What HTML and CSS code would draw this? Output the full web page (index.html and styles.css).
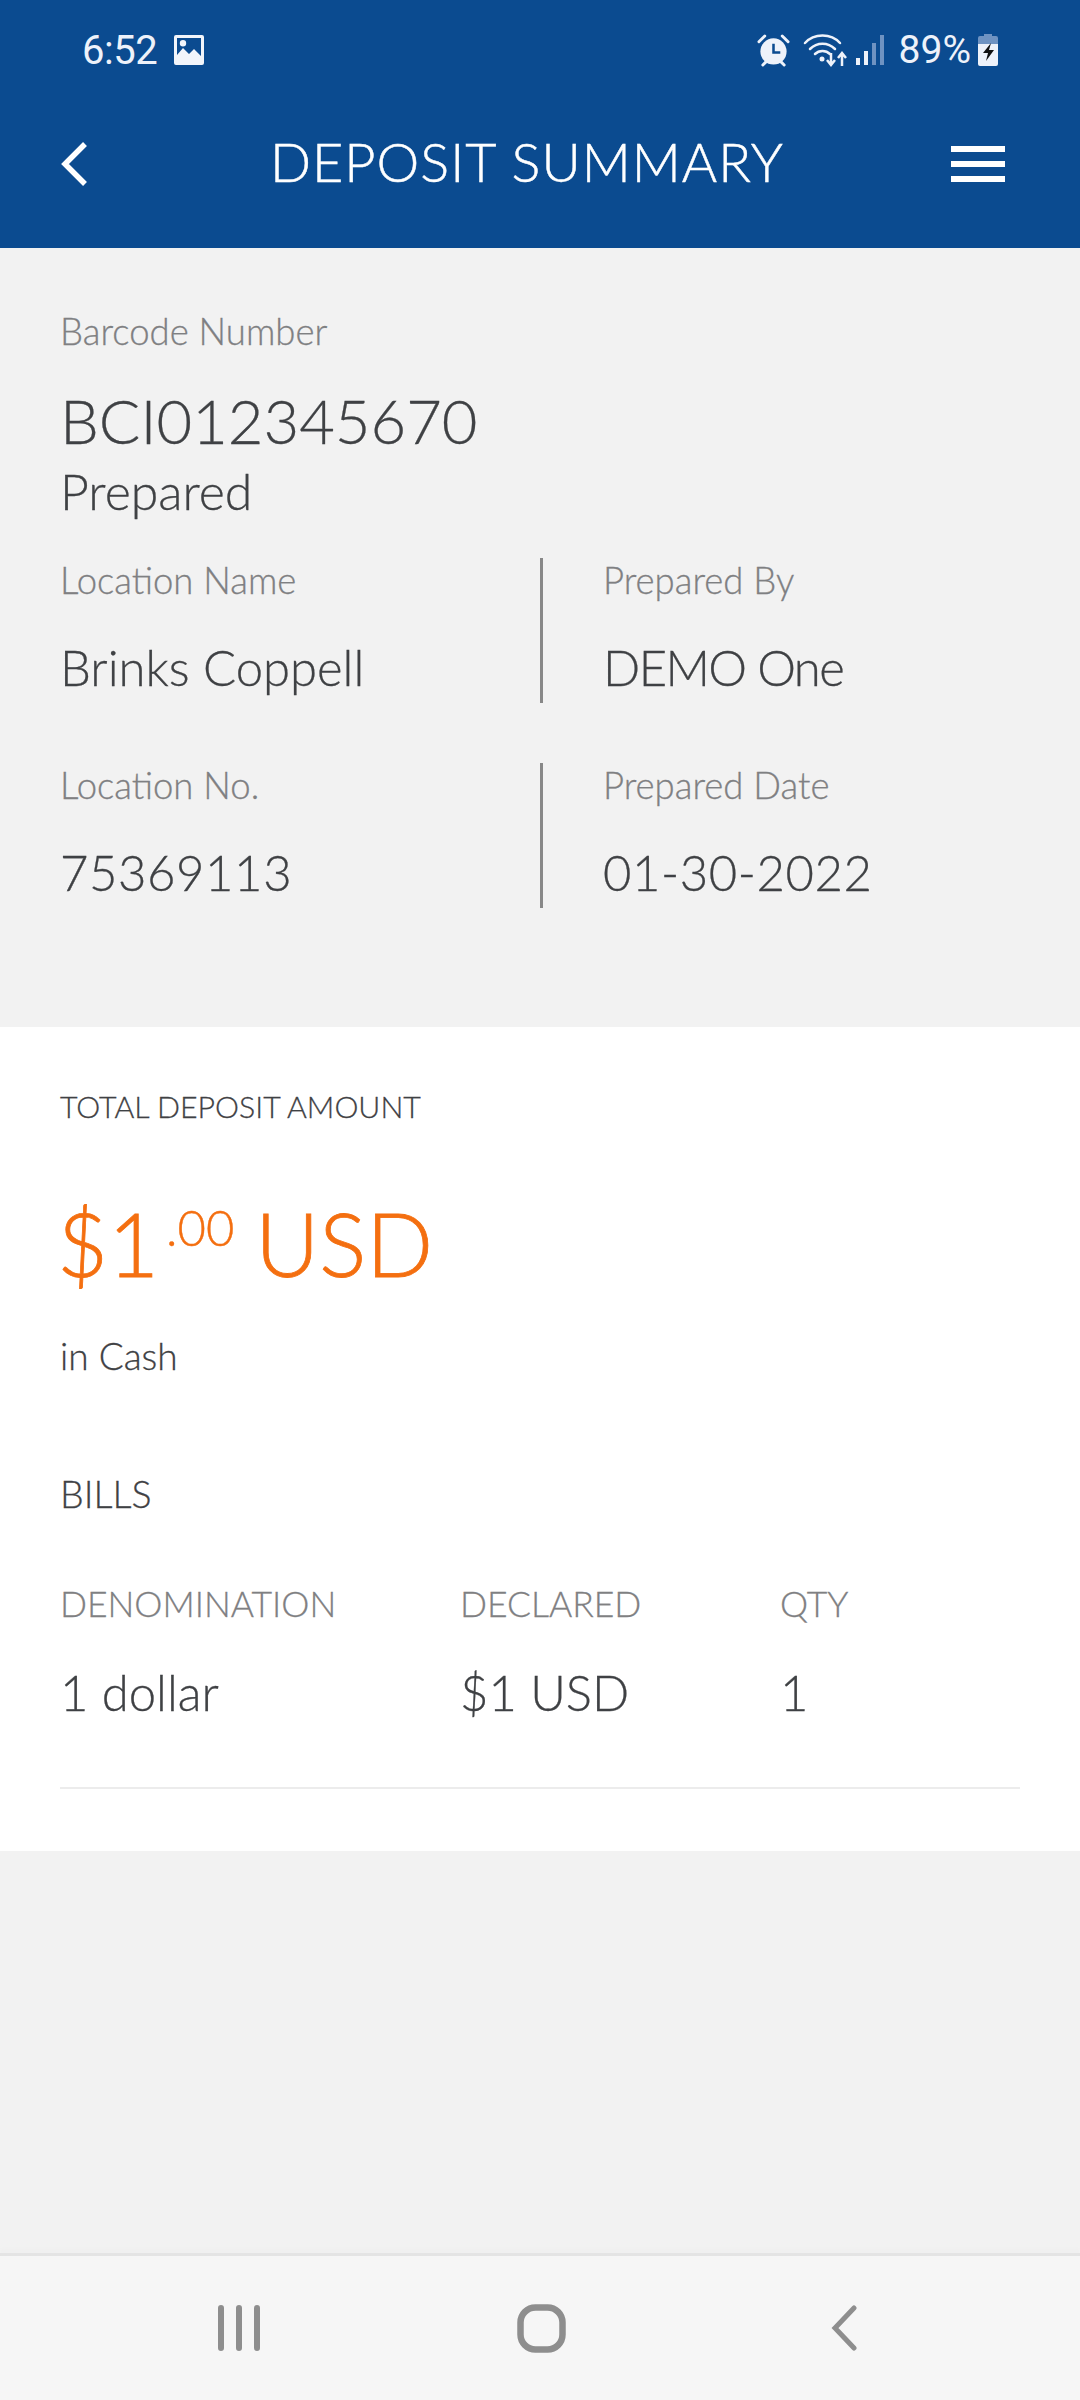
FILE: index.html
```html
<!DOCTYPE html>
<html lang="en">
<head>
<meta charset="utf-8">
<title>Deposit Summary</title>
<link rel="stylesheet" href="styles.css">
</head>
<body>
<div class="screen">
  <header class="topbar">
    <div class="status">
      <div class="status-left">
        <span class="clock">6:52</span>
        <svg class="ic-image" viewBox="0 0 30 30"><path fill="#f2f5fb" fill-rule="evenodd" d="M2 0h26a2 2 0 0 1 2 2v26a2 2 0 0 1-2 2H2a2 2 0 0 1-2-2V2a2 2 0 0 1 2-2zM3 3v17l6-7 6 6 5-5 7 7V3zM9 5a3.2 3.2 0 1 1 0 6.400a3.200 3.200 0 0 1 0-6.400z"/></svg>
      </div>
      <div class="status-right">
        <svg class="ic-alarm" viewBox="0 0 34 34"><circle cx="17" cy="18" r="13.500" fill="#eef2fa"/><path d="M17 10v9h7" fill="none" stroke="#0b4b90" stroke-width="2.600"/><path d="M2 8l6-6M32 8l-6-6M6 32l3-3M28 32l-3-3" stroke="#eef2fa" stroke-width="3" stroke-linecap="round"/></svg>
        <svg class="ic-wifi" viewBox="0 0 44 34"><path d="M2 10C11 0 28 0 37 10M7 16c7-7 18-7 25 0M12 21c4-4 11-4 15 0" fill="none" stroke="#eef2fa" stroke-width="2.500" stroke-linecap="round"/><circle cx="19" cy="26" r="2.500" fill="#eef2fa"/><path d="M28 20v11M24 27l4 5 4-5M39 33V21M35 25l4-5 4 5" fill="none" stroke="#eef2fa" stroke-width="2.500"/></svg>
        <svg class="ic-signal" viewBox="0 0 28 30"><rect x="0" y="23" width="4" height="7" fill="#eef2fa"/><rect x="8" y="16" width="4" height="14" fill="#eef2fa"/><rect x="16" y="8" width="4" height="22" fill="#6f93c2"/><rect x="24" y="0" width="4" height="30" fill="#6f93c2"/></svg>
        <span class="pct">89%</span>
        <svg class="ic-batt" viewBox="0 0 20 32"><path d="M6 0h8v2h4a2 2 0 0 1 2 2v8H0V4a2 2 0 0 1 2-2h4z" fill="#6f93c2"/><path d="M0 10h20v20a2 2 0 0 1-2 2H2a2 2 0 0 1-2-2z" fill="#eef2fa"/><path d="M13 9L5 19h5l-2 8 8-11h-5l2-7z" fill="#111"/></svg>
      </div>
    </div>
    <div class="navrow">
      <svg class="ic-back" viewBox="0 0 28 46"><path d="M25 3L5 23l20 20" fill="none" stroke="#fff" stroke-width="5.500"/></svg>
      <h1 class="title">DEPOSIT SUMMARY</h1>
      <div class="burger"><span></span><span></span><span></span></div>
    </div>
  </header>

  <section class="info">
    <div class="label">Barcode Number</div>
    <div class="barcode">BCI012345670</div>
    <div class="state">Prepared</div>
    <div class="grid">
      <div class="cell left"><div class="label">Location Name</div><div class="value">Brinks Coppell</div></div>
      <div class="cell right"><div class="label">Prepared By</div><div class="value caps">DEMO One</div></div>
      <div class="cell left"><div class="label">Location No.</div><div class="value num">75369113</div></div>
      <div class="cell right"><div class="label">Prepared Date</div><div class="value num">01-30-2022</div></div>
    </div>
  </section>

  <section class="totals">
    <div class="total-head">TOTAL DEPOSIT AMOUNT</div>
    <div class="amount">$1<sup class="cents">.00</sup> USD</div>
    <div class="incash">in Cash</div>
    <div class="bills">BILLS</div>
    <div class="table">
      <div class="th">DENOMINATION</div><div class="th">DECLARED</div><div class="th">QTY</div>
      <div class="td">1 dollar</div><div class="td">$1 USD</div><div class="td">1</div>
    </div>
    <div class="rule"></div>
  </section>

  <div class="spacer"></div>

  <footer class="sysnav">
    <svg class="nav-recent" viewBox="0 0 42 46"><path d="M3 3v40M21 3v40M39 3v40" stroke="#8e8e8e" stroke-width="6" stroke-linecap="round"/></svg>
    <svg class="nav-home" viewBox="0 0 49 49"><rect x="3.500" y="3.500" width="42" height="42" rx="15" fill="none" stroke="#8e8e8e" stroke-width="6.500"/></svg>
    <svg class="nav-back" viewBox="0 0 26 46"><path d="M23 3L4 23l19 20" fill="none" stroke="#8e8e8e" stroke-width="5" stroke-linecap="round"/></svg>
  </footer>
</div>
</body>
</html>
```
FILE: styles.css
```css
* { box-sizing: border-box; }
html, body { margin: 0; padding: 0; }
body { width: 1080px; height: 2400px; font-family: "Lato", "Liberation Sans", sans-serif; font-weight: 300; color: #3f4144; background: #f2f2f2; -webkit-text-stroke: 0.3px currentColor; }
.screen { width: 1080px; height: 2400px; display: flex; flex-direction: column; }

.topbar { height: 248px; background: #0b4b90; color: #fff; display: flex; flex-direction: column; flex: none; }
.status { height: 100px; padding: 0 82px 0 82px; display: flex; justify-content: space-between; align-items: center; font-family: "Roboto", sans-serif; font-weight: 400; color: #eef2fa; -webkit-text-stroke: 0; }
.status-left, .status-right { display: flex; align-items: center; }
.clock { font-size: 40px; letter-spacing: -0.500px; }
.ic-image { width: 30px; height: 30px; margin-left: 17px; }
.ic-alarm { width: 33px; height: 33px; }
.ic-wifi { width: 44px; height: 34px; margin-left: 13px; }
.ic-signal { width: 28px; height: 30px; margin-left: 9px; }
.pct { font-size: 39px; margin-left: 15px; }
.ic-batt { width: 20px; height: 32px; margin-left: 7px; }
.navrow { flex: 1; display: flex; align-items: center; justify-content: space-between; padding: 0 75px 20px 60px; }
.ic-back { width: 28px; height: 46px; flex: none; }
.title { margin: 0 0 6px; font-size: 54px; font-weight: 300; letter-spacing: 1px; flex: 1; text-align: center; padding-left: 15px; -webkit-text-stroke: 0.500px currentColor; }
.burger { width: 54px; flex: none; display: flex; flex-direction: column; gap: 9px; }
.burger span { display: block; height: 6px; background: #fff; }

.info { height: 779px; flex: none; padding: 63px 0 0 60px; }
.label { font-size: 36.500px; color: #7f8082; line-height: 40px; }
.barcode { font-size: 61.500px; line-height: 72px; margin-top: 33px; }
.state { font-size: 50px; line-height: 56px; margin-top: 7px; }
.grid { display: grid; grid-template-columns: 480px 1fr; row-gap: 60px; margin-top: 39px; }
.cell { height: 145px; }
.cell.right { border-left: 3px solid #888; padding-left: 60px; }
.cell .label { margin-top: 2px; }
.value { font-size: 49px; line-height: 56px; margin-top: 39px; }
.value.num { letter-spacing: 0.600px; }
.value.caps { letter-spacing: -1.600px; }

.totals { height: 824px; flex: none; background: #fff; padding: 60px 60px 0; }
.total-head { font-size: 30.300px; line-height: 38px; }
.amount { color: #f46f10; font-size: 88px; line-height: 100px; margin-top: 68px; margin-left: -3px; -webkit-text-stroke: 0.800px currentColor; }
.cents { font-size: 49px; vertical-align: baseline; position: relative; top: -31px; line-height: 0; margin-left: 7px; margin-right: -3px; -webkit-text-stroke: 0.400px currentColor; }
.incash { font-size: 37px; line-height: 44px; margin-top: 41px; }
.bills { font-size: 37.500px; line-height: 44px; margin-top: 94px; }
.table { display: grid; grid-template-columns: 400px 320px 1fr; margin-top: 66px; }
.th { font-size: 35.500px; line-height: 44px; color: #7f8082; }
.td { font-size: 49px; line-height: 56px; margin-top: 38px; }
.rule { height: 2px; background: #ececec; margin-top: 67px; }

.spacer { flex: 1; }
.sysnav { height: 147px; flex: none; background: #f6f6f6; border-top: 3px solid #e4e4e4; box-shadow: 0 -5px 4px rgba(0,0,0,.012); display: flex; align-items: center; }
.nav-recent { width: 42px; height: 46px; margin-left: 218px; }
.nav-home { width: 49px; height: 49px; margin-left: 257px; }
.nav-back { width: 26px; height: 46px; margin-left: 265px; }
```
